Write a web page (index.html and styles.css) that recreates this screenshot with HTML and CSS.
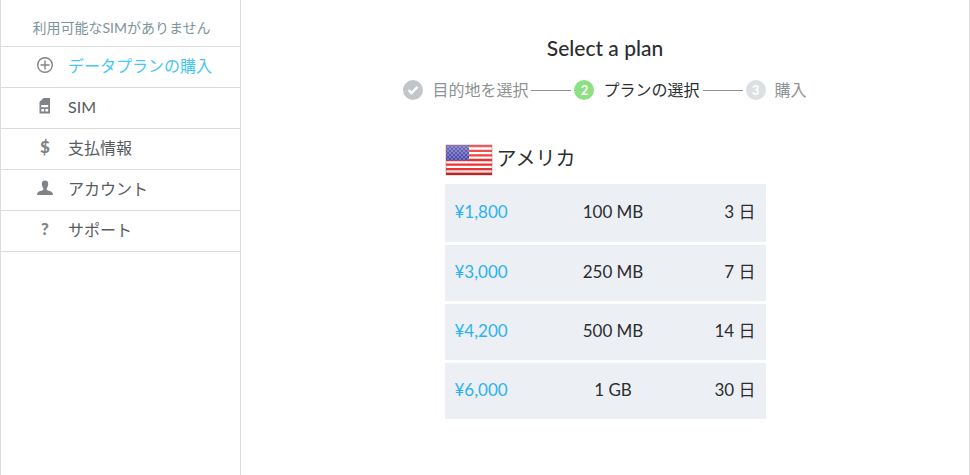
FILE: index.html
```
<!DOCTYPE html>
<html lang="ja">

<head>
    <meta charset="utf-8">
    <title>Select a plan</title>
    <link rel="stylesheet" href="styles.css">
</head>

<body>
    <div class="wrapper">
        <aside class="sidebar">
            <p class="status">利用可能なSIMがありません</p>
            <nav>
                <a class="active" href="#">
                    <svg class="icon" viewBox="0 0 18 18" fill="none" stroke="#808487" stroke-width="1.4">
                        <circle cx="9" cy="8" r="7.3" />
                        <path d="M9 3.500v9M4.500 8h9" />
                    </svg>
                    データプランの購入
                </a>
                <a href="#">
                    <svg class="icon" viewBox="0 0 18 18" fill="#808487">
                        <path fill-rule="evenodd" d="M7.500 0H14v15.500H3.500V4zM5.300 7v2.300h6.900V7zM5.300 11v2.600h2.800V11zM9.400 11v2.600h2.800V11z" />
                    </svg>
                    SIM
                </a>
                <a href="#">
                    <span class="icon sign">$</span>
                    支払情報
                </a>
                <a href="#">
                    <svg class="icon" viewBox="0 0 18 18" fill="#808487">
                        <path d="M9 .5c2.200 0 3.300 1.400 3.200 3.600-.1 2-.7 3.200-1.500 4.100v1.500c.5 1 5.800 1.300 6.100 3.700V15H1.200v-1.600c.3-2.400 5.600-2.700 6.100-3.700V8.200C6.500 7.300 5.900 6.100 5.800 4.100 5.700 1.900 6.800.5 9 .5z" />
                    </svg>
                    アカウント
                </a>
                <a href="#">
                    <span class="icon sign">?</span>
                    サポート
                </a>
            </nav>
        </aside>

        <main class="content">
            <h1>Select a plan</h1>
            <ol class="steps">
                <li class="done">
                    <span class="badge">
                        <svg viewBox="0 0 20 20" fill="none" stroke="#fff" stroke-width="2.400">
                            <path d="M5.500 10.200l3 2.800 6-6.200" />
                        </svg>
                    </span>
                    目的地を選択
                </li>
                <li class="current"><span class="badge">2</span>プランの選択</li>
                <li><span class="badge">3</span>購入</li>
            </ol>

            <section class="plans">
                <h2>
                    <svg class="flag" viewBox="0 0 48 32">
                        <defs>
                            <linearGradient id="shine" x1="0" y1="0" x2="0" y2="1">
                                <stop offset="0" stop-color="#fff" stop-opacity=".25" />
                                <stop offset=".5" stop-color="#fff" stop-opacity="0" />
                                <stop offset=".8" stop-color="#000" stop-opacity="0" />
                                <stop offset="1" stop-color="#500" stop-opacity=".35" />
                            </linearGradient>
                            <pattern id="stars" width="4" height="4" patternUnits="userSpaceOnUse">
                                <rect width="4" height="4" fill="#4747a8" />
                                <circle cx="1" cy="1" r=".8" fill="#a9a9de" />
                                <circle cx="3" cy="3" r=".8" fill="#a9a9de" />
                            </pattern>
                        </defs>
                        <rect x="1" y="1" width="46" height="30" fill="#fff" />
                        <path stroke="#f03030" stroke-width="2.300" d="M1 2.200h46M1 6.800h46M1 11.400h46M1 16h46M1 20.600h46M1 25.200h46M1 29.800h46" />
                        <rect x="1" y="1" width="23" height="15.500" fill="url(#stars)" />
                        <rect x="1" y="1" width="46" height="30" fill="url(#shine)" />
                        <rect x="1" y="1" width="46" height="30" fill="none" stroke="#a04040" stroke-opacity=".4" />
                    </svg>
                    アメリカ
                </h2>
                <table>
                    <tr>
                        <td class="price">¥1,800</td>
                        <td class="size">100 MB</td>
                        <td class="days">3 日</td>
                    </tr>
                    <tr>
                        <td class="price">¥3,000</td>
                        <td class="size">250 MB</td>
                        <td class="days">7 日</td>
                    </tr>
                    <tr>
                        <td class="price">¥4,200</td>
                        <td class="size">500 MB</td>
                        <td class="days">14 日</td>
                    </tr>
                    <tr>
                        <td class="price">¥6,000</td>
                        <td class="size">1 GB</td>
                        <td class="days">30 日</td>
                    </tr>
                </table>
            </section>
        </main>
    </div>
</body>

</html>
```
FILE: styles.css
```
* {
    box-sizing: border-box;
    margin: 0;
    padding: 0;
}

body {
    background-color: white;
    color: #2b2e30;
    font-family: Lato, "Noto Sans CJK JP", sans-serif;
    font-size: 16px;
    line-height: 24px;
}

.wrapper {
    display: flex;
    min-height: 100vh;
    border-left: 1px solid #dcdcdc;
    border-right: 1px solid #dcdcdc;
}

/* sidebar */
.sidebar {
    width: 240px;
    flex-shrink: 0;
    border-right: 1px solid #dcdcdc;
}

.status {
    padding: 16px 0 6px 2px;
    border-bottom: 1px solid #dcdcdc;
    color: #7e949b;
    font-size: 14px;
    text-align: center;
}

nav a {
    display: flex;
    align-items: center;
    gap: 14px;
    padding: 7px 0 9px 35px;
    border-bottom: 1px solid #dcdcdc;
    color: #565b5f;
    text-decoration: none;
}

nav a.active {
    color: #45c6f8;
}

.icon {
    width: 18px;
    height: 18px;
}

.sign {
    color: #808487;
    font-size: 17px;
    font-weight: 900;
    line-height: 16px;
    text-align: center;
}

/* main column */
.content {
    flex: 1;
    padding-top: 36px;
}

h1 {
    font-size: 21px;
    font-weight: 500;
    text-align: center;
}

.steps {
    display: flex;
    justify-content: center;
    margin-top: 18px;
    list-style: none;
    color: #8e9294;
}

.steps li {
    display: flex;
    align-items: center;
}

.steps li + li::before {
    content: "";
    width: 40px;
    height: 1px;
    margin: 0 3px;
    background-color: #8e9294;
}

.steps .current {
    color: #2b2e30;
}

.badge {
    width: 20px;
    height: 20px;
    margin-right: 9px;
    border-radius: 50%;
    background-color: #dce0e3;
    color: white;
    font-size: 13px;
    font-weight: bold;
    line-height: 20px;
    text-align: center;
}

.badge svg {
    display: block;
}

.done .badge {
    background-color: #c1c6ca;
}

.current .badge {
    background-color: #8de083;
}

/* plan list */
.plans {
    max-width: 321px;
    margin: 42px auto 0;
}

h2 {
    display: flex;
    gap: 4px;
    font-size: 20px;
    font-weight: normal;
    line-height: 28px;
}

.flag {
    width: 48px;
    height: 32px;
}

table {
    width: 100%;
    margin-top: 8px;
    border-collapse: collapse;
    table-layout: fixed;
    font-size: 17px;
}

td {
    height: 59px;
    padding: 0 10px 1px;
    border-bottom: 3px solid white;
    background-color: #eceff4;
    background-clip: padding-box;
}

.price {
    width: 35%;
    color: #2bb3ef;
}

.size {
    width: 35%;
    text-align: center;
}

.days {
    text-align: right;
}
```
